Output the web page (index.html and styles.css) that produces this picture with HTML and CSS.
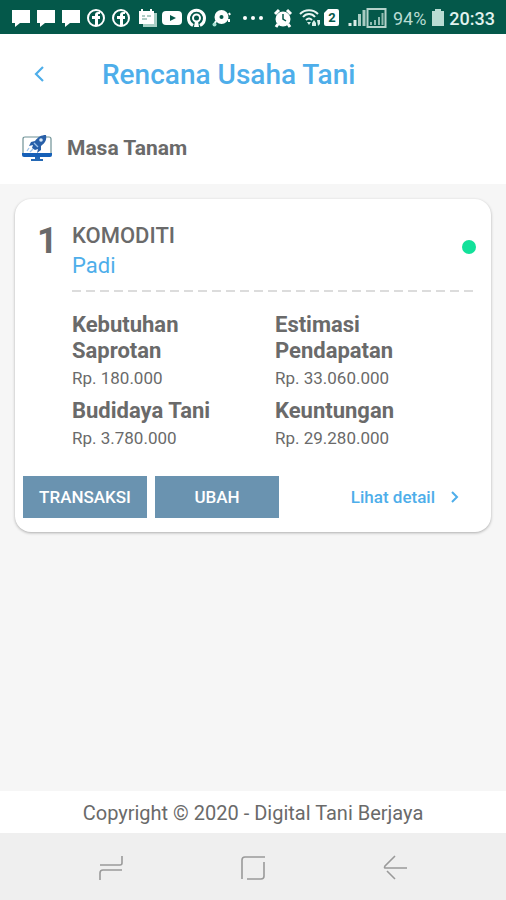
FILE: index.html
```html
<!DOCTYPE html>
<html lang="id">
<head>
  <meta charset="UTF-8" />
  <meta name="viewport" content="width=device-width, initial-scale=1.0" />
  <title>Rencana Usaha Tani</title>
  <link rel="stylesheet" href="styles.css">
</head>
<body>
  <svg class="sprite" aria-hidden="true">
    <symbol id="chat" viewBox="0 0 21 20"><path d="M1 2h18v13H9l-5 4v-4H1z" fill="#fff"/></symbol>
    <symbol id="facebook" viewBox="0 0 21 20">
      <circle cx="10" cy="10" r="8" fill="none" stroke="#fff" stroke-width="2"/>
      <path d="M9 18v-7H6V8h3V7c0-2 1-3 3-3h2v2h-1c-1 0-1 0-1 1v1h2v3h-2v7z" fill="#fff"/>
    </symbol>
  </svg>

  <div class="statusbar">
    <div class="notifications">
      <svg width="21" height="20"><use href="#chat"/></svg>
      <svg width="21" height="20"><use href="#chat"/></svg>
      <svg width="21" height="20"><use href="#chat"/></svg>
      <svg width="21" height="20"><use href="#facebook"/></svg>
      <svg width="21" height="20"><use href="#facebook"/></svg>
      <svg width="21" height="20" viewBox="0 0 21 20">
        <path d="M18 5h3v14H7v-3h11z" fill="#a8cfc5"/>
        <path d="M3 3h2V1h2v2h7V1h2v2h2v13H3z" fill="#fff"/>
        <path d="M6 8h3M11 8h4M6 11h5" stroke="#5c9a8b" stroke-width="1"/>
      </svg>
      <svg width="21" height="20" viewBox="0 0 21 20">
        <rect x="1" y="3" width="20" height="14" rx="4" fill="#fff"/>
        <path d="M9 7l6 3-6 3z" fill="#04584a"/>
      </svg>
      <svg width="21" height="20" viewBox="0 0 21 20">
        <path d="M7 17.500A8 8 0 1 1 14 17.500" fill="none" stroke="#fff" stroke-width="3"/>
        <circle cx="10.500" cy="10" r="3.500" fill="none" stroke="#fff" stroke-width="2"/>
        <path d="M9 13h3l1 6H8z" fill="#fff"/>
      </svg>
      <svg width="21" height="20" viewBox="0 0 21 20">
        <circle cx="10.500" cy="9" r="7" fill="#fff"/>
        <circle cx="10.500" cy="9" r="2" fill="#04584a"/>
        <path d="M5 13l-2 4M18 5l1 2M18 11v3" stroke="#fff" stroke-width="2"/>
        <circle cx="3.500" cy="16.500" r="2" fill="#a8e0d4"/>
      </svg>
      <svg class="more" width="22" height="20" viewBox="0 0 22 20">
        <g fill="#fff"><circle cx="3" cy="10" r="2"/><circle cx="11" cy="10" r="2"/><circle cx="19" cy="10" r="2"/></g>
      </svg>
    </div>
    <div class="system">
      <svg width="20" height="20" viewBox="0 0 20 20">
        <circle cx="10" cy="11" r="7.500" fill="#fff"/>
        <path d="M2 6l4-4M18 6l-4-4M5 16l-2 3M15 16l2 3" stroke="#fff" stroke-width="3"/>
        <path d="M10 6v5l3 2" fill="none" stroke="#04584a" stroke-width="1.500"/>
      </svg>
      <svg class="wifi" width="22" height="20" viewBox="0 0 22 20">
        <g fill="none" stroke="#e8f5f1" stroke-width="2"><path d="M1 6c5-5 13-5 18 0M4 9c3-4 9-4 12 0M7 12c2-2 4-2 6 0"/></g>
        <path d="M8 14h4l-2 3zM13 15l2-3 2 3v3h-4zM18 12h3v4l-2 2z" fill="#d8eee8"/>
      </svg>
      <svg width="17" height="20" viewBox="0 0 17 20">
        <path d="M5 1h9q2 0 2 2v13q0 2-2 2H3q-2 0-2-2V5z" fill="#fff"/>
        <text class="sim" x="9" y="14" text-anchor="middle">2</text>
      </svg>
      <svg class="signal" width="18" height="20" viewBox="0 0 18 20">
        <path d="M2 18v-3M7 18v-6" stroke="#dcebe7" stroke-width="3"/>
        <path d="M11.500 18V6M16 18V2" stroke="#a8cbc2" stroke-width="3"/>
      </svg>
      <svg width="21" height="20" viewBox="0 0 21 20">
        <rect x="1.500" y="1" width="18" height="18" fill="none" stroke="#b5d3cb" stroke-width="2"/>
        <path d="M5 17v-3M9 17v-5M13 17V9M16.500 17V5" stroke="#8fbbb0" stroke-width="2"/>
      </svg>
      <span class="battery-level">94%</span>
      <svg width="14" height="20" viewBox="0 0 14 20"><path d="M4 1h6v2h3v15H1V3h3z" fill="#b9dcd3"/></svg>
      <span class="clock">20:33</span>
    </div>
  </div>

  <header class="header">
    <div class="titlebar">
      <button class="back" aria-label="Kembali">
        <svg width="14" height="18" viewBox="0 0 14 18"><path d="M11 2L4 9l7 7" fill="none" stroke="#4eaeea" stroke-width="2.200"/></svg>
      </button>
      <h1>Rencana Usaha Tani</h1>
    </div>
    <div class="season">
      <svg width="32" height="28" viewBox="0 0 32 28">
        <path d="M2 20V5q0-2 2-2h24q2 0 2 2v15" fill="#fff" stroke="#6f9296" stroke-width="1.200"/>
        <path d="M1 19h30v2q0 2-2 2H3q-2 0-2-2z" fill="#1660b8"/>
        <path d="M14 23h5v2h3v2H10v-2h4z" fill="#2468b4"/>
        <path d="M25 1c-5 0-8 2-11 6l-4 1-2 4 4-1-1 3 3 2 3-1-1 4 4-3 0-4c4-3 6-6 5-11z" fill="#285fa8"/>
        <circle cx="20" cy="6" r="1.800" fill="#d5e7f8"/>
        <path d="M13 9l4 4M8 14l-2 3M12 15l-3 3" stroke="#9dc3ea" stroke-width="1.300"/>
      </svg>
      <h2>Masa Tanam</h2>
    </div>
  </header>

  <main class="content">
    <section class="card">
      <div class="card-top">
        <span class="number">1</span>
        <div class="commodity">
          <div>
            <h3>KOMODITI</h3>
            <p class="crop">Padi</p>
          </div>
          <span class="dot"></span>
        </div>
      </div>
      <svg class="divider" height="2"><line x1="0" y1="1" x2="100%" y2="1" stroke="#dcdcdc" stroke-width="2" stroke-dasharray="9 5"/></svg>
      <div class="details">
        <div>
          <h3>Kebutuhan Saprotan</h3>
          <p>Rp. 180.000</p>
        </div>
        <div>
          <h3>Estimasi Pendapatan</h3>
          <p>Rp. 33.060.000</p>
        </div>
        <div>
          <h3>Budidaya Tani</h3>
          <p>Rp. 3.780.000</p>
        </div>
        <div>
          <h3>Keuntungan</h3>
          <p>Rp. 29.280.000</p>
        </div>
      </div>
      <div class="actions">
        <button class="btn">TRANSAKSI</button>
        <button class="btn">UBAH</button>
        <a class="detail-link" href="#">Lihat detail
          <svg width="10" height="14" viewBox="0 0 10 14"><path d="M2 2l5 5-5 5" fill="none" stroke="#4eaeea" stroke-width="2"/></svg>
        </a>
      </div>
    </section>
  </main>

  <footer class="footer">Copyright © 2020 - Digital Tani Berjaya</footer>

  <nav class="navbar">
    <button aria-label="Aplikasi terbaru">
      <svg width="26" height="26" viewBox="0 0 26 26"><path d="M2 10h20q2 0 2-2V1M2 25v-7q0-3 3-3h19" fill="none" stroke="#9a9a9a" stroke-width="1.600"/></svg>
    </button>
    <button aria-label="Beranda">
      <svg width="26" height="26" viewBox="0 0 26 26"><path d="M2 24V5q0-3 3-3h20M24 7v14q0 3-3 3H7" fill="none" stroke="#9a9a9a" stroke-width="1.600"/></svg>
    </button>
    <button aria-label="Kembali">
      <svg width="26" height="26" viewBox="0 0 26 26"><path d="M13 1L3 11q-1 2 0 2h22M5 16l8 8" fill="none" stroke="#9a9a9a" stroke-width="1.600"/></svg>
    </button>
  </nav>
</body>
</html>
```

FILE: styles.css
```css
* {
  box-sizing: border-box;
}
body {
  margin: 0;
  min-height: 100vh;
  display: flex;
  flex-direction: column;
  font-family: Roboto, "Liberation Sans", sans-serif;
  background-color: #f6f6f6;
  color: #6a6a6a;
}
h1, h2, h3, p {
  margin: 0;
}
button {
  border: none;
  padding: 0;
  background: none;
  font-family: inherit;
  cursor: pointer;
}
svg {
  display: block;
  flex-shrink: 0;
}
.sprite {
  position: absolute;
  width: 0;
  height: 0;
}

/* status bar */
.statusbar {
  display: flex;
  justify-content: space-between;
  align-items: center;
  height: 34px;
  padding: 2px 11px 0;
  background-color: #04584a;
}
.notifications {
  display: flex;
  gap: 4px;
}
.more {
  margin-left: 6px;
}
.system {
  display: flex;
  align-items: center;
  font-size: 18px;
}
.wifi {
  margin: 0 2px 0 6px;
}
.sim {
  font-size: 13px;
  font-weight: 700;
  fill: #04584a;
}
.signal {
  margin-left: 8px;
}
.battery-level {
  margin: 0 5px 0 6px;
  color: #b9dcd3;
}
.clock {
  margin-left: 4px;
  color: #e0f2ee;
  font-weight: 500;
}

/* header */
.header {
  background-color: #fff;
}
.titlebar {
  display: flex;
  align-items: center;
  height: 80px;
  padding-left: 32px;
}
.back {
  width: 16px;
  margin-right: 54px;
}
h1 {
  font-size: 28px;
  font-weight: 500;
  color: #4eaeea;
}
.season {
  display: flex;
  align-items: center;
  gap: 14px;
  height: 70px;
  padding: 0 21px 2px;
}
h2 {
  font-size: 21px;
  font-weight: 700;
}

/* card */
.content {
  flex: 1;
  padding: 15px;
}
.card {
  padding: 24px 15px 14px 8px;
  background-color: #fff;
  border-radius: 16px;
  box-shadow: 0 1px 3px rgba(0, 0, 0, 0.3);
}
.card-top {
  display: flex;
}
.number {
  width: 49px;
  padding-left: 14px;
  font-size: 36px;
  line-height: 36px;
  font-weight: 700;
}
.commodity {
  flex: 1;
  display: flex;
  justify-content: space-between;
  align-items: center;
}
h3 {
  font-size: 22px;
  line-height: 26px;
  font-weight: 700;
}
.commodity h3 {
  font-weight: 500;
}
.crop {
  margin-top: 3px;
  font-size: 22px;
  line-height: 28px;
  color: #4eaeea;
}
.dot {
  width: 14px;
  height: 14px;
  margin-bottom: 10px;
  border-radius: 50%;
  background-color: #12e19a;
}
.divider {
  width: calc(100% - 49px);
  margin: 10px 0 20px 49px;
}
.details {
  display: grid;
  grid-template-columns: 1fr 1fr;
  column-gap: 2px;
  row-gap: 8px;
  padding-left: 49px;
}
.details div {
  padding-right: 50px;
}
.details p {
  margin-top: 2px;
  font-size: 17px;
  line-height: 24px;
}
.actions {
  display: flex;
  align-items: center;
  gap: 8px;
  margin-top: 26px;
}
.btn {
  width: 124px;
  height: 42px;
  background-color: #6a93b0;
  color: #fff;
  font-size: 17px;
  font-weight: 500;
}
.detail-link {
  display: flex;
  align-items: center;
  gap: 15px;
  margin-left: auto;
  padding-right: 16px;
  font-size: 17px;
  font-weight: 500;
  color: #4eaeea;
  text-decoration: none;
}

/* footer */
.footer {
  padding: 10px 0 8px;
  background-color: #fff;
  text-align: center;
  font-size: 20px;
  line-height: 24px;
}
.navbar {
  display: flex;
  justify-content: center;
  gap: 116px;
  padding: 22px 0 19px;
  background-color: #efefef;
}
```
